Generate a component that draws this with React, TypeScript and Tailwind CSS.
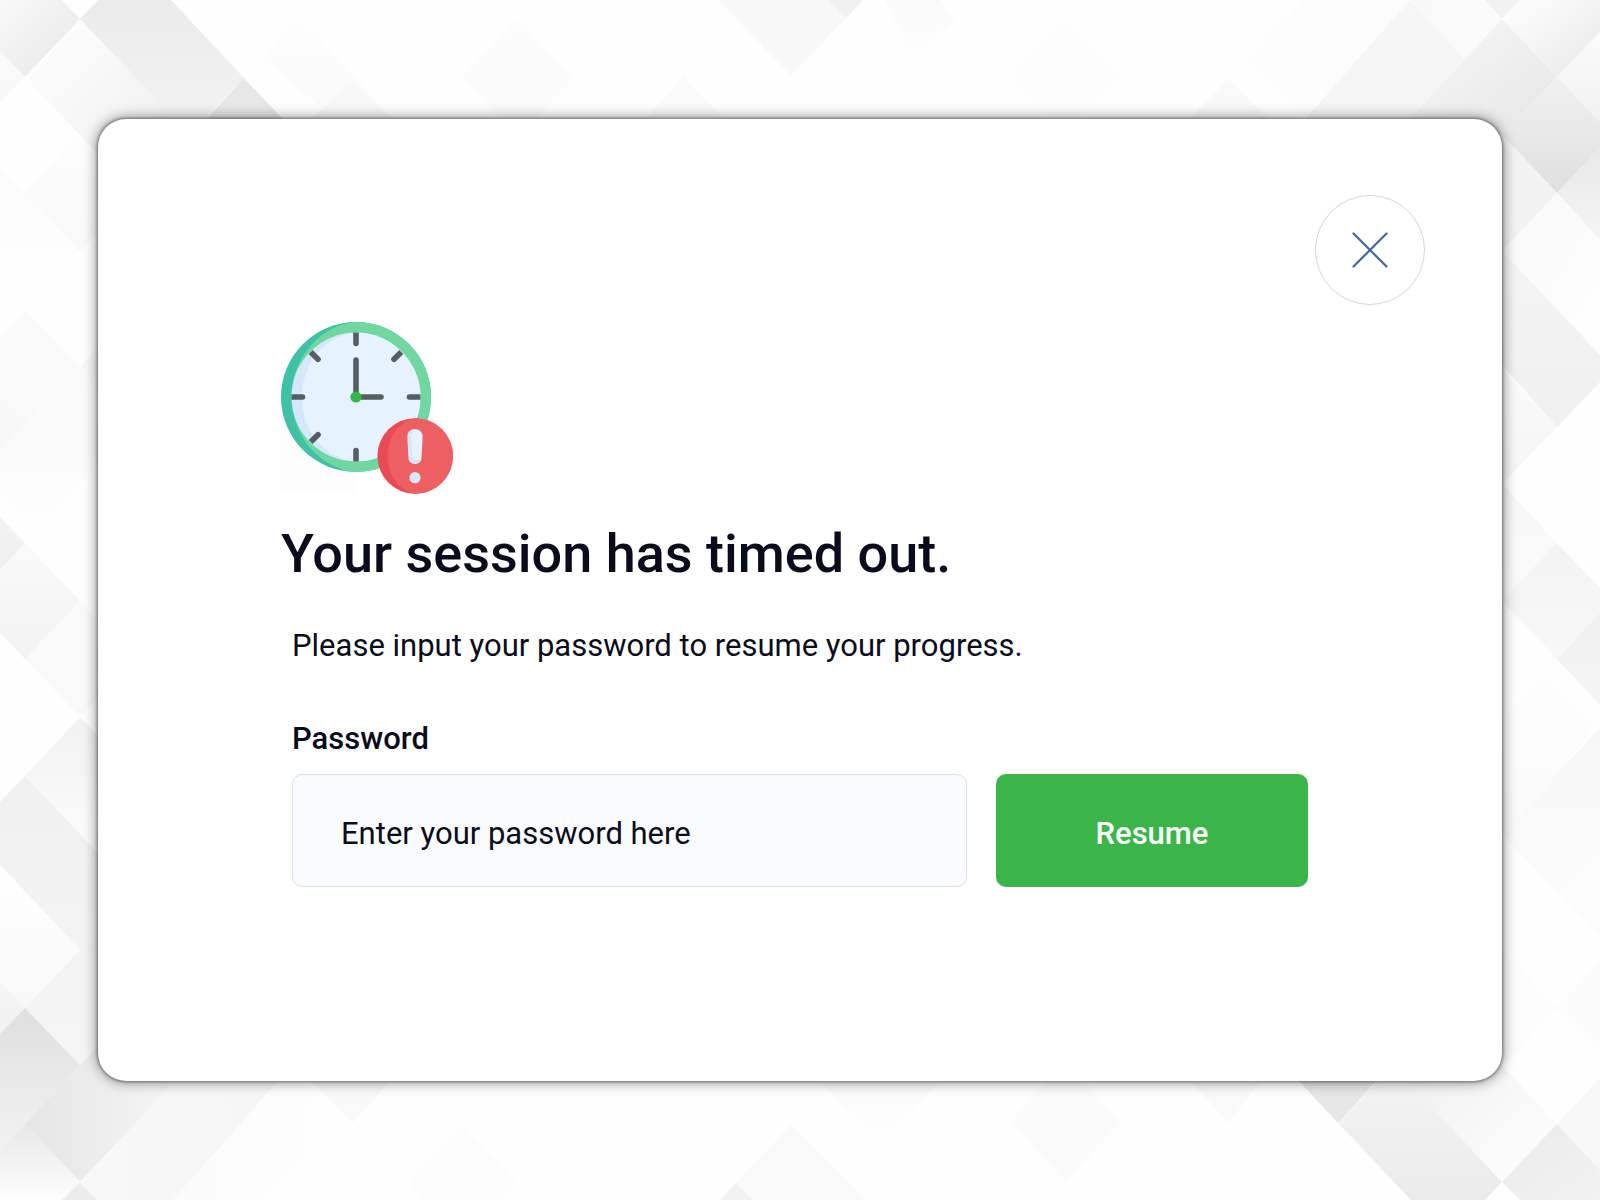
import type { FC } from 'react';

interface IFacet {
  points: string;
  from: string;
  to: string;
  // gradient direction: down, right, down-right
  dir: 'd' | 'r' | 'dr';
}

const directions = {
  d: { x1: 0, y1: 0, x2: 0, y2: 1 },
  r: { x1: 0, y1: 0, x2: 1, y2: 0 },
  dr: { x1: 0, y1: 0, x2: 1, y2: 1 },
};

const facets: IFacet[] = [
  // top left
  { points: '0,0 62,0 80,19 25,77 0,51', from: '#f9f9f9', to: '#e6e6e6', dir: 'dr' },
  { points: '0,51 25,77 0,103', from: '#fafafa', to: '#f8f8f8', dir: 'd' },
  { points: '80,19 190,135 135,193 28,80', from: '#ffffff', to: '#ececec', dir: 'dr' },
  { points: '98,0 171,0 244,78 190,135 80,19', from: '#ebebeb', to: '#f3f3f3', dir: 'd' },
  { points: '244,78 300,137 190,137', from: '#e7e7e7', to: '#e7e7e7', dir: 'd' },
  { points: '80,135 135,193 80,252 25,193', from: '#fdfdfd', to: '#f9f9f9', dir: 'd' },
  { points: '0,168 25,193 0,220', from: '#fcfcfc', to: '#fcfcfc', dir: 'd' },
  { points: '25,193 80,252 25,311 0,285 0,220', from: '#fcfcfc', to: '#ffffff', dir: 'd' },
  { points: '25,311 80,367 25,426 0,400 0,337', from: '#fafafa', to: '#f9f9f9', dir: 'd' },
  { points: '80,367 135,309 135,425', from: '#f8f8f8', to: '#f8f8f8', dir: 'd' },
  { points: '80,367 135,425 80,484 25,426', from: '#fafafa', to: '#fcfcfc', dir: 'd' },
  { points: '0,400 25,426 0,452', from: '#f8f8f8', to: '#f8f8f8', dir: 'd' },
  { points: '25,426 80,484 35,530 0,496 0,452', from: '#fafafa', to: '#fefefe', dir: 'd' },
  // left edge
  { points: '0,517 25,543 0,570', from: '#f2f2f2', to: '#f0f0f0', dir: 'd' },
  { points: '25,543 80,601 25,659 0,633 0,570', from: '#fafafa', to: '#f2f2f2', dir: 'd' },
  { points: '80,601 135,659 80,717 25,659', from: '#fafafa', to: '#f9f9f9', dir: 'd' },
  { points: '80,717 135,775 110,866 80,834 25,776', from: '#f1f1f1', to: '#fefefe', dir: 'd' },
  { points: '25,776 135,892 80,950 0,865 0,802', from: '#f0f0f0', to: '#f4f4f4', dir: 'd' },
  { points: '0,865 80,950 25,1008 0,982', from: '#ffffff', to: '#f8f8f8', dir: 'd' },
  { points: '80,950 135,892 135,1008 80,1065 25,1008', from: '#f2f2f2', to: '#f5f5f5', dir: 'd' },
  { points: '0,982 25,1008 0,1034', from: '#f5f5f5', to: '#f1f1f1', dir: 'd' },
  { points: '25,1008 80,1065 25,1124 0,1150 0,1034', from: '#dfdfdf', to: '#f2f2f2', dir: 'd' },
  // bottom
  { points: '80,1065 135,1008 190,1066 80,1182 25,1124', from: '#e5e5e5', to: '#f7f7f7', dir: 'r' },
  { points: '25,1124 80,1182 62,1200 0,1200 0,1150', from: '#e8e8e8', to: '#fdfdfd', dir: 'd' },
  { points: '80,1182 97,1200 62,1200', from: '#ececec', to: '#ececec', dir: 'd' },
  { points: '190,1066 293,1066 173,1200 97,1200 80,1182', from: '#f8f8f8', to: '#f5f5f5', dir: 'r' },
  { points: '278,1081 315,1081 338,1123 262,1200 173,1200', from: '#fbfbfb', to: '#fefefe', dir: 'r' },
  { points: '312,1081 390,1081 353,1123', from: '#f8f8f8', to: '#fafafa', dir: 'd' },
  { points: '462,1125 517,1182 500,1200 424,1200 408,1182', from: '#fcfcfc', to: '#fcfcfc', dir: 'd' },
  { points: '791,1125 865,1200 720,1200', from: '#f9f9f9', to: '#f9f9f9', dir: 'd' },
  { points: '736,1183 753,1200 720,1200', from: '#f2f2f2', to: '#f2f2f2', dir: 'd' },
  { points: '820,1081 940,1081 900,1123 870,1135', from: '#fafafa', to: '#fefefe', dir: 'd' },
  { points: '1046,1081 1084,1081 1120,1123 1065,1181 1010,1123', from: '#fbfbfb', to: '#fbfbfb', dir: 'd' },
  { points: '1190,1081 1260,1081 1229,1123', from: '#f9f9f9', to: '#fafafa', dir: 'd' },
  { points: '1282,1063 1393,1063 1338,1123', from: '#e5e5e5', to: '#e7e7e7', dir: 'd' },
  { points: '1393,1065 1502,1182 1485,1200 1411,1200 1338,1123', from: '#f4f4f4', to: '#ebebeb', dir: 'd' },
  { points: '1393,1065 1448,1008 1557,1124 1502,1182', from: '#ececec', to: '#ffffff', dir: 'dr' },
  { points: '1557,1124 1600,1170 1600,1200 1520,1200 1502,1182', from: '#eaeaea', to: '#f2f2f2', dir: 'dr' },
  { points: '1557,1124 1600,1078 1600,1170', from: '#f8f8f8', to: '#f8f8f8', dir: 'd' },
  // top
  { points: '299,19 354,77 393,119 335,119 262,58', from: '#fdfdfd', to: '#fafafa', dir: 'd' },
  { points: '351,78 390,119 312,119', from: '#f9f9f9', to: '#f7f7f7', dir: 'd' },
  { points: '518,19 573,78 535,119 500,119 462,77', from: '#fcfcfc', to: '#fbfbfb', dir: 'd' },
  { points: '718,0 863,0 791,76', from: '#f8f8f8', to: '#f9f9f9', dir: 'd' },
  { points: '828,0 863,0 846,18', from: '#f1f1f1', to: '#f1f1f1', dir: 'd' },
  { points: '683,77 724,119 645,119', from: '#f9f9f9', to: '#fafafa', dir: 'd' },
  { points: '885,0 940,0 955,19 915,60', from: '#fafafa', to: '#fefefe', dir: 'd' },
  { points: '1065,19 1120,77 1080,119 1050,119 1010,77', from: '#fdfdfd', to: '#fdfdfd', dir: 'd' },
  { points: '1229,78 1268,119 1190,119', from: '#fafafa', to: '#f7f7f7', dir: 'd' },
  { points: '1305,0 1410,0 1305,119 1245,60', from: '#fcfcfc', to: '#fdfdfd', dir: 'd' },
  { points: '1410,0 1465,60 1410,119 1305,119', from: '#f6f6f6', to: '#f5f5f5', dir: 'd' },
  { points: '1410,0 1485,0 1502,19 1465,60', from: '#f8f8f8', to: '#fcfcfc', dir: 'r' },
  // top right
  { points: '1485,0 1520,0 1502,19', from: '#f2f2f2', to: '#f2f2f2', dir: 'd' },
  { points: '1520,0 1600,0 1600,32 1557,77 1502,19', from: '#ffffff', to: '#e8e8e8', dir: 'dr' },
  { points: '1502,19 1557,77 1502,135 1410,135 1410,119', from: '#f9f9f9', to: '#e5e5e5', dir: 'dr' },
  { points: '1557,77 1600,32 1600,122', from: '#fbfbfb', to: '#f1f1f1', dir: 'd' },
  { points: '1557,77 1600,122 1600,148 1557,193 1502,135', from: '#f1f1f1', to: '#dfdfdf', dir: 'd' },
  { points: '1502,135 1557,193 1502,251 1480,200', from: '#f3f3f3', to: '#f2f2f2', dir: 'd' },
  { points: '1557,193 1600,148 1600,240', from: '#e8e8e8', to: '#f5f5f5', dir: 'd' },
  { points: '1557,193 1600,240 1600,355 1502,251', from: '#f8f8f8', to: '#ffffff', dir: 'dr' },
  // right edge
  { points: '1502,251 1600,355 1600,382 1557,427 1480,340', from: '#f4f4f4', to: '#f0f0f0', dir: 'd' },
  { points: '1502,369 1557,427 1502,484', from: '#fafafa', to: '#f5f5f5', dir: 'd' },
  { points: '1502,484 1557,543 1502,601', from: '#f7f7f7', to: '#fbfbfb', dir: 'd' },
  { points: '1557,543 1600,588 1600,613 1557,659 1502,601', from: '#f3f3f3', to: '#f8f8f8', dir: 'd' },
  { points: '1557,659 1600,613 1600,705', from: '#f0f0f0', to: '#f5f5f5', dir: 'd' },
  { points: '1545,673 1594,725 1557,776 1502,834 1502,718', from: '#fdfdfd', to: '#fbfbfb', dir: 'd' },
  { points: '1600,728 1600,845 1557,892 1502,834', from: '#f7f7f7', to: '#fbfbfb', dir: 'd' },
  { points: '1557,892 1600,845 1600,936', from: '#fcfcfc', to: '#fcfcfc', dir: 'd' },
  { points: '1502,950 1557,1008 1502,1066', from: '#fcfcfc', to: '#fcfcfc', dir: 'd' },
  { points: '1557,1008 1600,962 1600,1053', from: '#fbfbfb', to: '#fcfcfc', dir: 'd' },
];

const Backdrop: FC = () => (
  <svg
    className="absolute inset-0 w-full h-full"
    viewBox="0 0 1600 1200"
    preserveAspectRatio="xMidYMid slice"
    aria-hidden="true"
  >
    <defs>
      {facets.map(({ points, from, to, dir }, index) => (
        <linearGradient key={points} id={`facet-${index}`} {...directions[dir]}>
          <stop offset="0" stopColor={from} />
          <stop offset="1" stopColor={to} />
        </linearGradient>
      ))}
    </defs>
    {facets.map(({ points }, index) => (
      <polygon key={points} points={points} fill={`url(#facet-${index})`} />
    ))}
  </svg>
);

const ClockAlertIcon: FC = () => (
  <svg className="w-[172px] h-[172px]" viewBox="0 0 172 172" fill="none" aria-hidden="true">
    <path d="M0 75H75V172H0Z" fill="#fdfdfd" />

    <circle cx="75" cy="75" r="75" fill="#3fc1a5" />
    <path d="M75 0a75 75 0 0 1 0 150C42 148 10.500 116 10.500 75S42 2 75 0z" fill="#70d7a1" />
    <circle cx="75" cy="75" r="64.5" fill="#d5e8fb" />
    <path d="M75 10.500a64.500 64.500 0 0 1 0 129C45 137 21 110 21 75S45 13 75 10.500z" fill="#e6f3fe" />

    <g fill="#545e65">
      <path d="M72.2 10.5h5.6v11a2.8 2.8 0 0 1-5.6 0z" />
      <path d="M72.2 139.5h5.6v-11a2.8 2.8 0 0 0-5.6 0z" />
      <path d="M10.5 72.2v5.6h11a2.8 2.8 0 0 0 0-5.6z" />
      <path d="M139.5 72.2v5.6h-11a2.8 2.8 0 0 1 0-5.6z" />
      <path d="M27.7 32l4-4 7.3 7.3a2.8 2.8 0 0 1-4 4z" />
      <path d="M122.3 32l-4-4-7.3 7.3a2.8 2.8 0 0 0 4 4z" />
      <path d="M27.7 118l4 4 7.3-7.3a2.8 2.8 0 0 0-4-4z" />
    </g>
    <path d="M75 38v37h25" stroke="#545e65" strokeWidth="5.6" strokeLinecap="round" />
    <circle cx="75" cy="75" r="5.6" fill="#37b548" />

    <circle cx="134.2" cy="134" r="37.8" fill="#e94a54" />
    <path d="M134.200 96.200a37.800 37.800 0 0 1 0 75.600C119 169 106.800 154 106.800 134S119 99 134.200 96.200z" fill="#ed6062" />
    <path
      d="M134 107c4.500 0 7.900 3.500 7.700 8l-1.200 21.500c-.2 3.200-3 5.500-6.500 5.500s-6.300-2.300-6.500-5.500L126.300 115c-.2-4.500 3.200-8 7.700-8z"
      fill="#d5e8f9"
    />
    <path
      d="M135.500 108.500c3.500.5 5.700 3 5.500 6.500l-1.200 19.500c-.2 2.200-2 3.500-4.300 3.500-2.700 0-4-1.500-4.300-4.500L130 116c-.2-4.500 1.500-8 5.500-7.500z"
      fill="#e6f3fe"
    />
    <circle cx="134" cy="155.700" r="5.600" fill="#d5e8f9" />
  </svg>
);

const CloseIcon: FC = () => (
  <svg
    className="w-[36px] h-[36px]"
    viewBox="0 0 36 36"
    fill="none"
    stroke="#41699a"
    strokeWidth="2.2"
    strokeLinecap="round"
    aria-hidden="true"
  >
    <path d="M1.500 1.500l33 33M34.500 1.500l-33 33" />
  </svg>
);

export default function App() {
  return (
    <main className="relative min-h-screen flex bg-[#fefefe] px-[98px] py-[119px] font-[Roboto,sans-serif] text-[#0a0c1b]">
      <Backdrop />

      <section
        role="dialog"
        aria-labelledby="session-title"
        className="relative flex-1 flex flex-col rounded-[28px] bg-white pt-[76px] shadow-[0_0_3px_1px_rgba(0,0,0,0.4),0_0_14px_1px_rgba(0,0,0,0.45)]"
      >
        <div className="flex justify-end pr-[77px]">
          <button
            type="button"
            aria-label="Close"
            className="w-[110px] h-[110px] flex items-center justify-center border border-[#d6d6d6] rounded-full"
          >
            <CloseIcon />
          </button>
        </div>

        <div className="flex flex-col items-start pt-[17px] pl-[183px]">
          <ClockAlertIcon />
          <h1 id="session-title" className="mt-[25px] text-[54px] leading-[70px] font-medium">
            Your session has timed out.
          </h1>
        </div>

        <form className="flex flex-col px-[194px]" onSubmit={(e) => e.preventDefault()}>
          <p className="mt-[37px] text-[31px] leading-[40px]">
            Please input your password to resume your progress.
          </p>
          <label htmlFor="password" className="mt-[53px] text-[31px] leading-[40px] font-medium">
            Password
          </label>
          <div className="mt-[15px] flex gap-[29px]">
            <input
              id="password"
              type="password"
              placeholder="Enter your password here"
              className="flex-1 min-w-0 h-[113px] pt-[5px] pl-[48px] pr-[24px] text-[31px] bg-[#fafbff] border border-[#d3e0f0] rounded-[10px] placeholder:text-[#0a0c1b] placeholder:opacity-100"
            />
            <button
              type="submit"
              className="w-[312px] h-[113px] pt-[7px] text-[31px] font-medium text-white bg-[#3bb54a] rounded-[10px]"
            >
              Resume
            </button>
          </div>
        </form>
      </section>
    </main>
  );
}
